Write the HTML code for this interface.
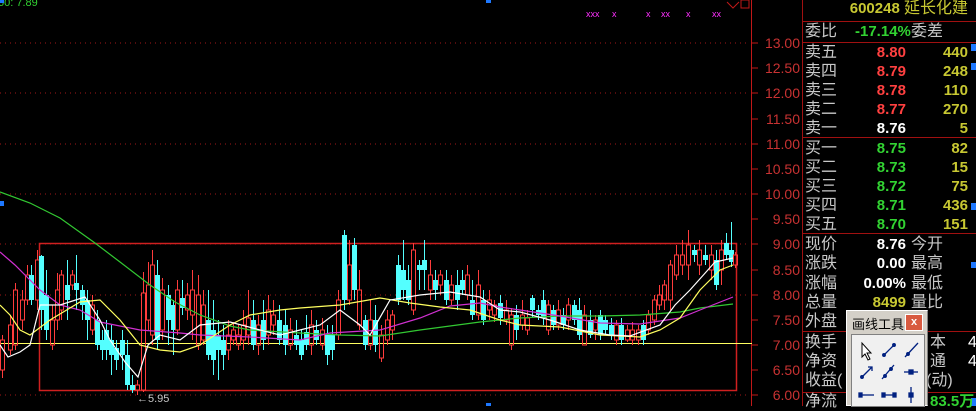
<!DOCTYPE html>
<html><head><meta charset="utf-8">
<style>
*{margin:0;padding:0;box-sizing:border-box}
body{width:976px;height:406px;background:#000;overflow:hidden;position:relative;font-family:"Liberation Sans","Noto Sans CJK SC",sans-serif}
.t{position:absolute;white-space:nowrap;line-height:19px;font-size:16px}
.l{color:#c8c8c8;left:805px}
.l2{color:#c8c8c8;left:911px}
.p{right:70px;font-weight:bold;font-family:"Liberation Sans",sans-serif;font-size:15px}
.v{right:8px;font-weight:bold;color:#c8c832;font-family:"Liberation Sans",sans-serif;font-size:15px}
.r{color:#ff4040}.g{color:#32d232}.w{color:#fff}.y{color:#c8c832}
.ax{position:absolute;right:176px;color:#c83232;font-size:14px;font-family:"Liberation Sans",sans-serif;line-height:16px}
.hl{position:absolute;left:802px;width:174px;height:1px;background:#a01010}
</style></head><body>
<svg width="976" height="406" style="position:absolute;left:0;top:0">
<g stroke="#a01818" stroke-dasharray="1,4" stroke-width="1">
<line x1="0" y1="43" x2="750" y2="43"/><line x1="0" y1="93" x2="750" y2="93"/><line x1="0" y1="144" x2="750" y2="144"/><line x1="0" y1="194" x2="750" y2="194"/><line x1="0" y1="244" x2="750" y2="244"/><line x1="0" y1="295" x2="750" y2="295"/><line x1="0" y1="395" x2="750" y2="395"/>
</g>
<line x1="751.5" y1="0" x2="751.5" y2="406" stroke="#c01818"/>
<g stroke="#c01818">
<line x1="752" y1="43" x2="758" y2="43"/><line x1="752" y1="68" x2="758" y2="68"/><line x1="752" y1="93" x2="758" y2="93"/><line x1="752" y1="119" x2="758" y2="119"/><line x1="752" y1="144" x2="758" y2="144"/><line x1="752" y1="169" x2="758" y2="169"/><line x1="752" y1="194" x2="758" y2="194"/><line x1="752" y1="219" x2="758" y2="219"/><line x1="752" y1="244" x2="758" y2="244"/><line x1="752" y1="270" x2="758" y2="270"/><line x1="752" y1="295" x2="758" y2="295"/><line x1="752" y1="320" x2="758" y2="320"/><line x1="752" y1="345" x2="758" y2="345"/><line x1="752" y1="370" x2="758" y2="370"/><line x1="752" y1="395" x2="758" y2="395"/>
</g>
<line x1="802.5" y1="0" x2="802.5" y2="406" stroke="#a01010"/>
<rect x="39.5" y="243.5" width="697" height="147" fill="none" stroke="#d02020" stroke-width="1.5"/>
<line x1="0" y1="343.5" x2="752" y2="343.5" stroke="#ffff60"/>
<g id="c"></g>
<g fill="none" stroke-width="1.2">
<polyline stroke="#32c832" points="0,192 30,203 60,218 95,243 120,262 150,285 175,302 200,315 230,326 250,330 300,333 340,335 380,336 420,330 480,322 520,318 560,316 600,316 640,315 680,312 700,308 733,304"/>
<polyline stroke="#d030d0" points="0,252 15,265 40,290 60,305 80,310 100,322 140,330 180,333 200,335 250,337 300,340 330,333 380,330 420,318 450,306 480,303 500,307 520,310 560,316 600,323 640,324 680,318 700,310 733,297"/>
<polyline stroke="#ffff60" points="0,305 10,315 20,330 30,335 50,320 80,302 100,300 120,320 140,345 160,350 180,352 200,345 230,325 250,315 280,310 300,308 340,305 380,298 410,303 440,307 470,310 500,320 520,325 560,327 600,335 640,337 660,330 680,318 700,290 720,270 733,265"/>
<polyline stroke="#ffffff" points="0,345 8,357 20,352 30,345 40,305 60,305 85,297 100,320 110,340 125,362 138,377 148,345 160,335 180,340 200,325 230,322 260,330 280,335 300,330 320,325 340,310 360,325 370,335 390,300 420,295 450,292 480,297 500,310 520,312 550,320 580,330 610,335 630,336 660,325 675,305 690,290 715,262 733,258"/>
</g>
<g fill="#ff30ff" font-size="9" font-family="Liberation Sans"><text x="586" y="17">xxx</text><text x="612" y="17">x</text><text x="646" y="17">x</text><text x="661" y="17">xx</text><text x="686" y="17">x</text><text x="712" y="17">xx</text></g>
<path d="M727 2 L733 8 L739 2" fill="none" stroke="#c01818"/><rect x="741" y="0" width="8" height="8" fill="none" stroke="#c01818"/>
<text x="137" y="402" fill="#c8c8c8" font-size="11" font-family="Liberation Sans">←5.95</text>
<text x="-2" y="6" fill="#32d232" font-size="11" font-family="Liberation Sans">60: 7.89</text>
<g fill="#1e78ff"><rect x="0" y="0" width="4" height="3"/><rect x="486" y="0" width="5" height="3"/><rect x="0" y="201" width="4" height="5"/><rect x="486" y="403" width="5" height="3"/><rect x="971" y="44" width="5" height="7"/><rect x="971" y="63" width="5" height="7"/><rect x="971" y="203" width="5" height="7"/><rect x="971" y="262" width="5" height="6"/><rect x="971" y="398" width="5" height="8"/></g>
</svg>
<div class="ax" style="top:35px">13.00</div><div class="ax" style="top:60px">12.50</div><div class="ax" style="top:85px">12.00</div><div class="ax" style="top:111px">11.50</div><div class="ax" style="top:136px">11.00</div><div class="ax" style="top:161px">10.50</div><div class="ax" style="top:186px">10.00</div><div class="ax" style="top:211px">9.50</div><div class="ax" style="top:236px">9.00</div><div class="ax" style="top:262px">8.50</div><div class="ax" style="top:287px">8.00</div><div class="ax" style="top:312px">7.50</div><div class="ax" style="top:337px">7.00</div><div class="ax" style="top:362px">6.50</div><div class="ax" style="top:387px">6.00</div>
<div class="hl" style="top:21px"></div><div class="hl" style="top:42px"></div><div class="hl" style="top:137px"></div><div class="hl" style="top:233px"></div><div class="hl" style="top:331px"></div><div class="hl" style="top:392px"></div>
<div class="t y" style="right:8px;top:-1px;font-weight:bold;font-size:15px">600248 <span style="font-weight:normal;font-size:16px">延长化建</span></div>
<div class="t l" style="top:22px">委比</div><div class="t g" style="left:855px;top:22px;font-weight:bold;font-size:15px">-17.14%</div><div class="t l2" style="top:22px">委差</div>
<div class="t l" style="top:43px">卖五</div><div class="t p r" style="top:43px">8.80</div><div class="t v" style="top:43px">440</div>
<div class="t l" style="top:62px">卖四</div><div class="t p r" style="top:62px">8.79</div><div class="t v" style="top:62px">248</div>
<div class="t l" style="top:81px">卖三</div><div class="t p r" style="top:81px">8.78</div><div class="t v" style="top:81px">110</div>
<div class="t l" style="top:100px">卖二</div><div class="t p r" style="top:100px">8.77</div><div class="t v" style="top:100px">270</div>
<div class="t l" style="top:119px">卖一</div><div class="t p w" style="top:119px">8.76</div><div class="t v" style="top:119px">5</div>
<div class="t l" style="top:139px">买一</div><div class="t p g" style="top:139px">8.75</div><div class="t v" style="top:139px">82</div>
<div class="t l" style="top:158px">买二</div><div class="t p g" style="top:158px">8.73</div><div class="t v" style="top:158px">15</div>
<div class="t l" style="top:177px">买三</div><div class="t p g" style="top:177px">8.72</div><div class="t v" style="top:177px">75</div>
<div class="t l" style="top:196px">买四</div><div class="t p g" style="top:196px">8.71</div><div class="t v" style="top:196px">436</div>
<div class="t l" style="top:215px">买五</div><div class="t p g" style="top:215px">8.70</div><div class="t v" style="top:215px">151</div>
<div class="t l" style="top:235px">现价</div><div class="t p w" style="top:235px">8.76</div><div class="t l2" style="top:235px">今开</div>
<div class="t l" style="top:254px">涨跌</div><div class="t p w" style="top:254px">0.00</div><div class="t l2" style="top:254px">最高</div>
<div class="t l" style="top:274px">涨幅</div><div class="t p w" style="top:274px">0.00%</div><div class="t l2" style="top:274px">最低</div>
<div class="t l" style="top:293px">总量</div><div class="t p y" style="top:293px">8499</div><div class="t l2" style="top:293px">量比</div>
<div class="t l" style="top:312px">外盘</div><div class="t l2" style="top:312px">盘</div>
<div class="t l" style="top:333px">换手</div><div class="t l2" style="left:930px;top:333px">本</div><div class="t w" style="left:968px;top:333px">4</div>
<div class="t l" style="top:352px">净资</div><div class="t l2" style="left:930px;top:352px">通</div><div class="t w" style="left:968px;top:352px">4</div>
<div class="t l" style="top:371px">收益(</div><div class="t l2" style="left:926px;top:371px">(动)</div>
<div class="t l" style="top:392px">净流</div><div class="t g" style="left:930px;top:392px;font-weight:bold;font-size:15px">83.5万</div>
<div style="position:absolute;left:846px;top:310px;width:82px;height:96px;background:#d4d0c8;border:1px solid #fff;border-right-color:#808080">
 <div style="position:absolute;left:5px;top:3px;font-size:13px;color:#000;font-family:'Liberation Sans','Noto Sans CJK SC',sans-serif">画线工具</div>
 <div style="position:absolute;left:58px;top:3px;width:18px;height:17px;background:#d85a40;border:1px solid #fff;color:#fff;font-size:11px;text-align:center;line-height:15px;font-weight:bold">x</div>
 <div style="position:absolute;left:4px;top:23px;width:74px;height:73px;background:#f0f0f0;border:1px solid #808080">
 <svg width="74" height="73" style="position:absolute;left:0;top:0">
 <path d="M10 8 L10 22 L13 19 L16 25 L18 24 L15 18 L19 18 Z" fill="#fff" stroke="#000"/>
 <g stroke="#002080" stroke-width="1.3" fill="#002080">
 <line x1="32" y1="20" x2="42" y2="10"/><circle cx="32" cy="20" r="1.3"/><circle cx="42" cy="10" r="1.3"/>
 <line x1="53" y1="22" x2="66" y2="8"/><circle cx="56" cy="19" r="1.3"/>
 <line x1="10" y1="42" x2="20" y2="32"/><path d="M16 32 L20 32 L20 36" fill="none"/><circle cx="10" cy="42" r="1.3"/>
 <line x1="30" y1="44" x2="42" y2="30"/><circle cx="33" cy="41" r="1.3"/><circle cx="39" cy="34" r="1.3"/>
 <line x1="52" y1="37" x2="66" y2="37"/><rect x="57" y="35" width="4" height="4"/>
 <line x1="8" y1="60" x2="22" y2="60"/><rect x="7" y="58" width="3" height="4"/>
 <line x1="30" y1="60" x2="44" y2="60"/><rect x="30" y="58" width="3" height="4"/><rect x="41" y="58" width="3" height="4"/>
 <line x1="59" y1="52" x2="59" y2="68"/><rect x="57" y="58" width="4" height="4"/>
 </g></svg></div>
</div>
<script>
var d="2u340,370,335,378;10u325,350,315,355;15u290,345,283,350;22u300,320,290,330;27u275,300,265,305;31d275,300,265,305;37u260,300,250,310;41d256,310,255,330;46d295,330,270,340;52u320,345,305,350;57u290,320,273,330;61u275,310,270,320;67d285,300,260,320;72u275,285,270,290;76d283,290,255,310;82d290,305,285,320;87d300,320,290,340;92u305,330,295,335;97d320,345,310,350;102d340,350,330,360;106d330,350,320,360;111d340,355,325,375;116d348,360,340,370;122d340,355,330,370;127d355,385,340,390;132d385,390,375,393;137u385,390,380,395;143u293,390,272,392;148u285,320,262,330;152u265,335,250,345;157d275,340,260,350;162u290,330,278,340;168d295,320,285,345;173d305,330,300,355;177u290,330,280,335;182d298,308,280,315;187u295,310,283,320;192u290,315,270,340;198u295,345,275,350;203u305,340,290,345;208d320,355,290,360;213d330,360,300,375;218d335,350,320,380;223d340,355,325,370;228u335,350,320,360;233u330,340,322,345;238u335,345,325,350;243u325,340,310,350;248u318,335,290,345;253d320,345,300,350;258u325,345,315,355;263d320,340,300,350;268u310,335,295,345;273u315,325,300,335;279d320,340,305,345;285d325,345,310,355;290u330,345,318,350;296d335,345,320,350;301d340,355,330,360;306d332,345,315,350;311u325,345,310,355;316d330,340,320,345;322u330,345,318,350;327d335,355,325,365;332d335,350,325,360;338u300,335,290,340;344d235,300,230,310;349u265,300,240,305;354d245,290,238,300;359u290,325,270,330;365d320,345,315,350;370u320,345,300,350;375d320,345,305,352;381u335,358,325,362;387u320,340,310,345;392u315,330,310,340;398d265,300,255,305;403d270,290,240,300;408d280,300,265,305;413u250,310,243,315;419d265,270,260,290;424d260,270,240,290;430u275,290,260,300;435d280,290,270,300;440u275,285,270,295;446d280,300,270,305;451u285,300,275,305;457d285,300,270,310;462d280,290,270,295;467u275,295,265,300;472d300,315,280,320;478u285,315,270,320;483d300,320,290,325;489u300,310,290,320;494u305,315,300,322;500d303,318,295,325;506u310,320,300,325;511u315,345,308,350;516d315,330,305,340;522u315,325,300,330;527u318,330,310,335;532d298,310,295,318;538d310,315,305,320;543d300,318,290,325;548u305,330,300,335;553d310,325,305,330;558u310,325,300,330;563d315,325,308,330;568u305,320,298,330;574d305,320,300,325;579d310,335,298,340;584u315,345,305,345;590d320,335,310,338;595u320,330,315,340;600d315,335,310,340;605d320,330,315,335;611d325,335,318,340;616u325,340,320,345;621d325,340,318,345;627u330,340,325,342;632u330,340,322,345;638u330,340,325,345;643d325,340,320,345;648u315,330,310,335;654u300,320,295,325;659u295,305,285,310;664u285,300,280,310;670u265,300,260,310;676u255,275,245,280;682u255,265,240,275;688u245,265,230,280;694d250,255,245,262;699u250,265,240,275;705d255,260,245,265;711u255,270,245,280;716d260,285,250,290;721u250,270,240,285;726d243,255,233,260;731d250,262,222,267;735u255,265,252,268";
var s="";d.split(";").forEach(function(e){var m=e.match(/(\d+)([ud])(\d+),(\d+),(\d+),(\d+)/);var x=+m[1],t=+m[3],b=+m[4],h=+m[5],l=+m[6];if(m[2]=="u"){s+='<line x1="'+(x+.5)+'" y1="'+h+'" x2="'+(x+.5)+'" y2="'+t+'" stroke="#ff3c3c"/><line x1="'+(x+.5)+'" y1="'+b+'" x2="'+(x+.5)+'" y2="'+l+'" stroke="#ff3c3c"/><rect x="'+(x-1.5)+'" y="'+t+'" width="4" height="'+(b-t)+'" fill="none" stroke="#ff3c3c"/>';}else{s+='<line x1="'+(x+.5)+'" y1="'+h+'" x2="'+(x+.5)+'" y2="'+l+'" stroke="#54ffff"/><rect x="'+(x-2)+'" y="'+t+'" width="5" height="'+(b-t)+'" fill="#54ffff"/>';}});
document.getElementById("c").innerHTML=s;
</script>
</body></html>
